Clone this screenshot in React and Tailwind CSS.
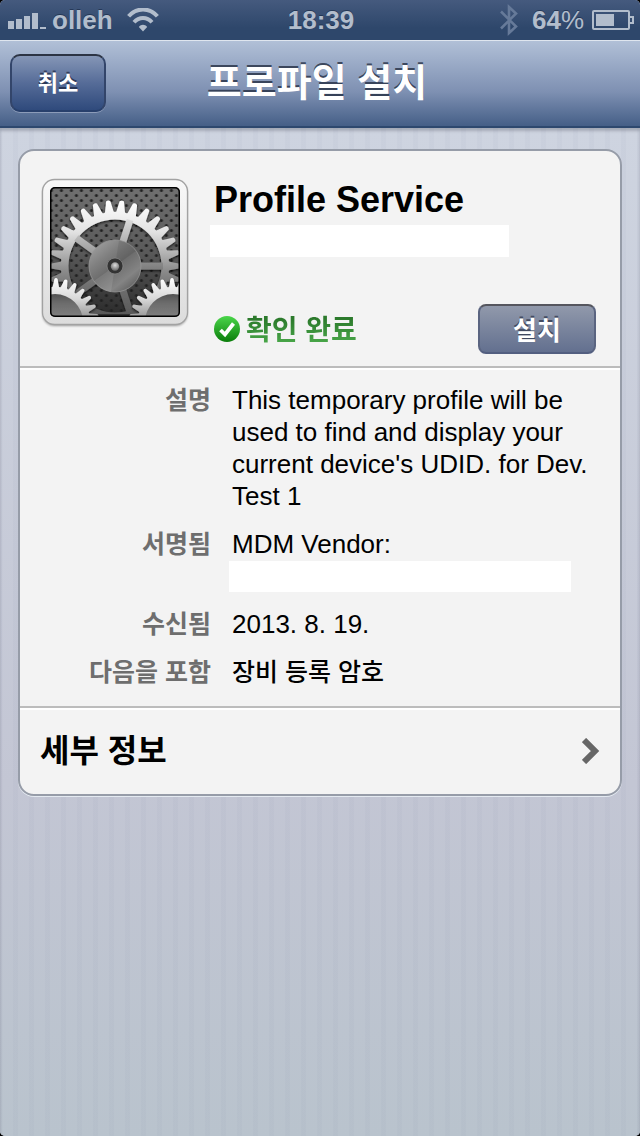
import React from "react";

const gearPath = (cx, cy, tip, root, teeth, phase) => {
  const step = (Math.PI * 2) / teeth;
  const at = (r, a) =>
    `${(cx + r * Math.sin(a)).toFixed(2)} ${(cy - r * Math.cos(a)).toFixed(2)}`;
  let d = "";
  for (let i = 0; i < teeth; i++) {
    const a = (i + phase) * step;
    d += `${i ? "L" : "M"}${at(root, a - step * 0.38)} L${at(tip - 1, a - step * 0.16)} Q${at(tip + 0.8, a)} ${at(tip - 1, a + step * 0.16)} L${at(root, a + step * 0.38)} Q${at(root - 1, a + step * 0.5)} ${at(root, a + step * 0.62)} `;
  }
  return d + "Z";
};

const ring = (cx, cy, r) =>
  ` M${cx - r} ${cy} a${r} ${r} 0 1 0 ${r * 2} 0 a${r} ${r} 0 1 0 ${-r * 2} 0 Z`;

const bigGear = gearPath(74, 88, 66, 54.5, 30, 0.5) + ring(74, 88, 46.5);
const leftGear = gearPath(14, 144, 44, 35.5, 27, 0.1) + ring(14, 144, 28);
const rightGear = gearPath(132, 144, 44, 35.5, 27, -0.1) + ring(132, 144, 28);

function SettingsIcon() {
  return (
    <svg viewBox="0 0 148 150" className="h-[150px] w-[148px] shrink-0" aria-hidden="true">
      <defs>
        <linearGradient id="frame" x1="0" y1="0" x2="0" y2="1">
          <stop offset="0" stopColor="#f8f8f8" />
          <stop offset="1" stopColor="#dcdcdc" />
        </linearGradient>
        <linearGradient id="plate" x1="0" y1="0" x2="0" y2="1">
          <stop offset="0" stopColor="#707070" />
          <stop offset="0.5" stopColor="#5a5a5a" />
          <stop offset="1" stopColor="#2a2a2a" />
        </linearGradient>
        <linearGradient id="steel" gradientUnits="userSpaceOnUse" x1="0" y1="22" x2="0" y2="150">
          <stop offset="0" stopColor="#ffffff" />
          <stop offset="0.25" stopColor="#e2e2e2" />
          <stop offset="0.55" stopColor="#8c8c8c" />
          <stop offset="0.8" stopColor="#5c5c5c" />
          <stop offset="1" stopColor="#555555" />
        </linearGradient>
        <linearGradient id="spoke" gradientUnits="userSpaceOnUse" x1="0" y1="40" x2="0" y2="140">
          <stop offset="0" stopColor="#dedede" />
          <stop offset="0.5" stopColor="#808080" />
          <stop offset="1" stopColor="#555555" />
        </linearGradient>
        <linearGradient id="small" gradientUnits="userSpaceOnUse" x1="0" y1="100" x2="0" y2="142">
          <stop offset="0" stopColor="#ffffff" />
          <stop offset="0.5" stopColor="#d8d8d8" />
          <stop offset="1" stopColor="#8e8e8e" />
        </linearGradient>
        <linearGradient id="disc" gradientUnits="userSpaceOnUse" x1="0" y1="115" x2="0" y2="140">
          <stop offset="0" stopColor="#505050" />
          <stop offset="0.4" stopColor="#6c6c6c" />
          <stop offset="1" stopColor="#808080" />
        </linearGradient>
        <linearGradient id="hub" x1="0.1" y1="0" x2="0.9" y2="1">
          <stop offset="0" stopColor="#a4a4a4" />
          <stop offset="0.3" stopColor="#808080" />
          <stop offset="0.5" stopColor="#6c6c6c" />
          <stop offset="0.75" stopColor="#848484" />
          <stop offset="1" stopColor="#555555" />
        </linearGradient>
        <radialGradient id="pin" cx="0.5" cy="0.35" r="0.6">
          <stop offset="0" stopColor="#dddddd" />
          <stop offset="1" stopColor="#707070" />
        </radialGradient>
        <pattern id="holes" width="10" height="10" x="2.4" y="5" patternUnits="userSpaceOnUse">
          <circle cx="3" cy="2.6" r="1.5" fill="#202020" />
          <circle cx="8" cy="7.6" r="1.5" fill="#202020" />
        </pattern>
        <clipPath id="window">
          <rect x="9" y="9" width="130" height="130" rx="5" />
        </clipPath>
        <filter id="drop" x="-20%" y="-20%" width="140%" height="140%">
          <feDropShadow dx="0" dy="1.5" stdDeviation="1.3" floodOpacity="0.7" />
        </filter>
        <filter id="soft">
          <feGaussianBlur stdDeviation="1.2" />
        </filter>
      </defs>
      <rect x="1.5" y="3" width="145" height="145" rx="12" fill="#000" opacity="0.35" filter="url(#soft)" />
      <rect x="1.5" y="1.5" width="145" height="145" rx="12" fill="url(#frame)" stroke="#a2a2a2" strokeWidth="1.3" />
      <g clipPath="url(#window)">
        <rect x="9" y="9" width="130" height="130" fill="url(#plate)" />
        <rect x="9" y="9" width="130" height="130" fill="url(#holes)" />
        <g filter="url(#drop)">
          <path d={bigGear} fill="url(#steel)" fillRule="evenodd" />
          <g stroke="url(#spoke)" strokeWidth="7">
            <path d="M96 88.1 H122" />
            <path d="M80.8 67.1 L89 42" />
            <path d="M56.2 75.1 L35.3 60" />
            <path d="M56.2 100.9 L35.3 116" />
            <path d="M80.8 108.9 L89 134" />
          </g>
        </g>
        <circle cx="74" cy="88" r="26" fill="url(#hub)" stroke="#969696" strokeWidth="0.8" />
        <path d="M74 88 L53 103 A26 26 0 0 0 70 114 Z" fill="#fff" opacity="0.1" />
        <path d="M74 88 L95 73 A26 26 0 0 0 78 62 Z" fill="#000" opacity="0.08" />
        <circle cx="74" cy="88" r="8" fill="#333" stroke="#8c8c8c" strokeWidth="0.7" />
        <circle cx="74" cy="88.5" r="4.2" fill="url(#pin)" />
        <path d="M54 139 V136 H94 V139 Z" fill="#333" />
        <g filter="url(#drop)">
          <circle cx="14" cy="144" r="29" fill="url(#disc)" />
          <circle cx="132" cy="144" r="29" fill="url(#disc)" />
          <path d={leftGear} fill="url(#small)" fillRule="evenodd" />
          <path d={rightGear} fill="url(#small)" fillRule="evenodd" />
        </g>
        <rect x="9" y="9" width="130" height="130" rx="5" fill="none" stroke="#000" strokeWidth="3" />
      </g>
    </svg>
  );
}

function StatusBar() {
  return (
    <header className="grid h-10 grid-cols-[1fr_auto_1fr] items-center bg-linear-to-b from-[#455a7e] to-[#2e476b] to-70% pl-2 pr-[6px] text-[26px] font-bold leading-10 text-[#b2bdcc] text-shadow-[0_-1px_0_rgb(15_30_55/0.5)]">
      <div className="flex items-center">
        <svg viewBox="0 0 38 18" className="mt-[2px] h-[18px] w-[38px]" fill="#b2bdcc" role="img" aria-label="Signal">
          <path d="M0 9h6v8H0zM8 7h6v10H8zM16 4h6v13h-6zM24 1h6v16h-6zM32 15h6v2h-6z" />
        </svg>
        <span className="ml-[6px]">olleh</span>
        <svg viewBox="0 0 32 24" className="ml-[14px] h-6 w-8" fill="none" stroke="#b2bdcc" role="img" aria-label="Wi-Fi">
          <path d="M1.6 8.3 C9.5 -0.8 22.5 -0.8 30.4 8.3" strokeWidth="4" />
          <path d="M7 14.3 C12 8.6 20 8.6 25 14.3" strokeWidth="4" />
          <path d="M11.8 19 C14 16 18 16 20.2 19 L16 23.6 Z" fill="#b2bdcc" stroke="none" />
        </svg>
      </div>
      <time>18:39</time>
      <div className="flex items-center justify-end">
        <svg viewBox="0 0 18 32" className="h-8 w-[18px]" fill="none" stroke="#667a99" strokeWidth="2.6" role="img" aria-label="Bluetooth">
          <path d="M1 7.5 L16 22.5 L9 29 V3 L16 9.5 L1 24.5" />
        </svg>
        <span className="ml-[14px]">64<span className="font-normal">%</span></span>
        <svg viewBox="0 0 42 22" className="ml-2 h-[22px] w-[42px]" role="img" aria-label="Battery">
          <rect x="1" y="2" width="36" height="18" rx="1" fill="none" stroke="#b2bdcc" strokeWidth="2" />
          <rect x="4" y="5" width="18" height="12" fill="#b2bdcc" />
          <path d="M38 8 H41 V14 H38" fill="none" stroke="#b2bdcc" strokeWidth="2" />
        </svg>
      </div>
    </header>
  );
}

function Row({ label, children }) {
  return (
    <>
      <dt className="text-right text-[25px] font-bold text-[#6e6e6e]">{label}</dt>
      <dd>{children}</dd>
    </>
  );
}

export default function App() {
  return (
    <div className="min-h-screen bg-black font-['Liberation_Sans','Noto_Sans_CJK_KR',sans-serif]">
      <div className="flex min-h-screen flex-col overflow-hidden rounded-[5px] bg-[#c3c8d5]">
        <StatusBar />
        <nav className="grid h-[88px] grid-cols-[1fr_auto_1fr] items-center border-b-2 border-t border-b-[#2d486e] border-t-[#dfe6ef] bg-linear-to-b from-[#b1c0d7] via-[#7e90b2] via-60% to-[#455f87] pb-px pl-[10px] pr-4">
          <button className="h-[58px] w-24 justify-self-start rounded-[10px] border-2 border-x-[#33456a] border-b-[#28406c] border-t-[#2c3444] bg-linear-to-b from-[#8596b6] via-[#566c98] via-50% to-[#2f4a7c] text-[22px] font-bold text-white shadow-[0_1px_0_#8c9cb9] text-shadow-[0_-2px_0_rgb(25_35_60/0.7)]">
            취소
          </button>
          <h1 className="text-[38px] font-bold leading-[80px] text-white text-shadow-[0_-2px_0_rgb(35_45_65/0.8)]">
            프로파일 설치
          </h1>
        </nav>
        <main className="grow bg-[repeating-linear-gradient(90deg,rgb(100_110_145/0.04)_0_2px,transparent_2px_13px,rgb(100_110_145/0.04)_13px_16px),linear-gradient(#ced4e0,#c3c6d4_65%,#b9c3cd)] px-[18px] pb-10 pt-[21px] shadow-[inset_0_3px_3px_rgb(90_95_110/0.35)]">
          <article className="rounded-2xl border-2 border-[#969ca8] bg-[#f3f3f3] shadow-[0_1px_0_#e4eaf1]">
            <section className="flex h-[217px] border-b-2 border-[#bcbcbc] pl-[21px] pr-6 pt-[27px]">
              <SettingsIcon />
              <div className="ml-[21px] flex grow flex-col">
                <h2 className="ml-1 text-[36px] font-bold leading-[44px]">Profile Service</h2>
                <div className="mt-[3px] h-8 w-[299px] bg-white" />
                <div className="mt-[47px] flex items-center justify-between">
                  <p className="ml-1 flex items-center gap-[6px] text-[28px] font-bold leading-[50px] text-[#3a903a]">
                    <svg viewBox="0 0 26 26" className="h-[26px] w-[26px]" aria-hidden="true">
                      <defs>
                        <linearGradient id="ok" x1="0" y1="0" x2="0" y2="1">
                          <stop offset="0" stopColor="#4ad64a" />
                          <stop offset="1" stopColor="#0b7d0b" />
                        </linearGradient>
                      </defs>
                      <circle cx="13" cy="13" r="13" fill="url(#ok)" />
                      <path d="M6.5 14 L11 18.5 L19.5 7.5" fill="none" stroke="#fff" strokeWidth="3.8" />
                    </svg>
                    <span className="bg-linear-to-b from-[#2c7a2c] from-30% to-[#47a447] to-75% bg-clip-text pt-1 leading-[46px] text-transparent">확인 완료</span>
                  </p>
                  <button className="h-[50px] w-[118px] rounded-lg border-2 border-x-[#5a6480] border-b-[#535f80] border-t-[#55565e] bg-linear-to-b from-[#9199ab] to-[#63708f] pt-1 text-[26px] font-bold leading-none text-white text-shadow-[0_-2px_0_rgb(50_58_80/0.8)]">
                    설치
                  </button>
                </div>
              </div>
            </section>
            <dl className="grid grid-cols-[191px_1fr] gap-x-[21px] gap-y-4 border-b-2 border-t-2 border-b-[#bcbcbc] border-t-white pb-[18px] pr-6 pt-[14px] text-[26px] leading-8 text-black">
              <Row label="설명">
                This temporary profile will be used to find and display your current device's UDID. for Dev. Test 1
              </Row>
              <Row label="서명됨">
                MDM Vendor:
                <div className="-ml-[3px] h-8 w-[342px] border-t border-[#f3f3f3] bg-white" />
              </Row>
              <Row label="수신됨">2013. 8. 19.</Row>
              <Row label="다음을 포함">
                <span className="text-[25px] font-medium">장비 등록 암호</span>
              </Row>
            </dl>
            <a href="#details" className="flex h-[86px] items-center justify-between rounded-b-2xl border-t-2 border-white pb-[2px] pl-5 pr-5 text-[32px] font-bold text-black">
              세부 정보
              <svg viewBox="0 0 18 26" className="h-[26px] w-[18px]" aria-hidden="true">
                <path d="M2 2 L13 13 L2 24" fill="none" stroke="#666" strokeWidth="6" />
              </svg>
            </a>
          </article>
        </main>
      </div>
    </div>
  );
}
